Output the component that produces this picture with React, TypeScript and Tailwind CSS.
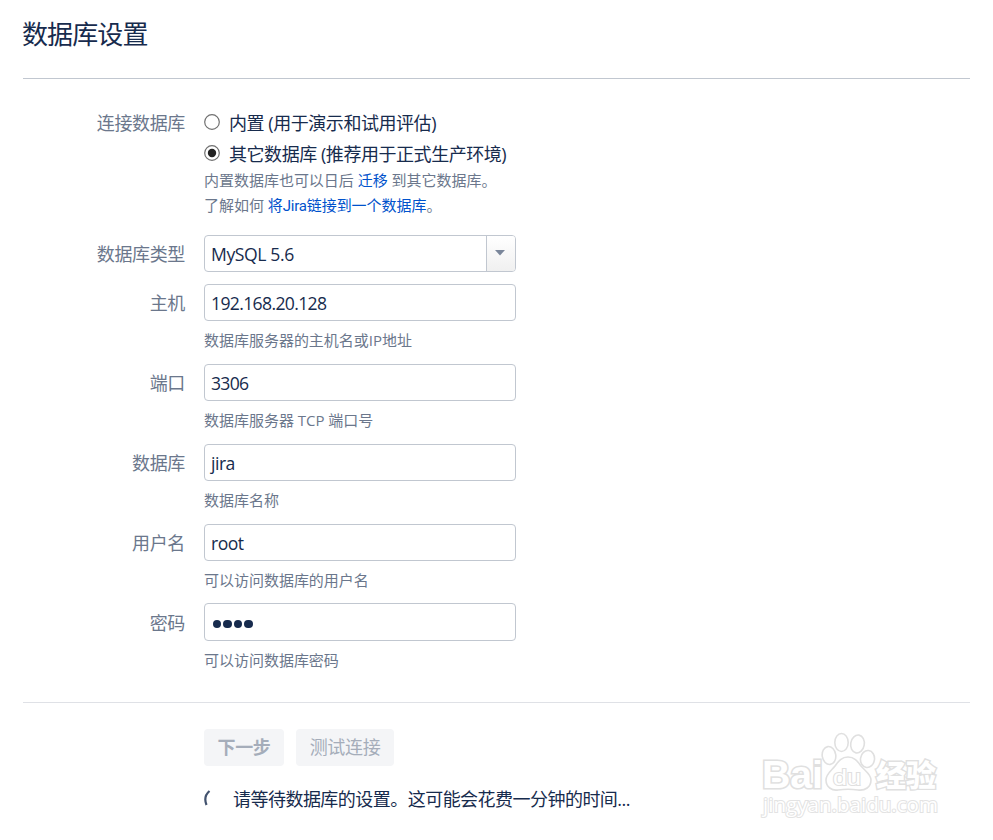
import type { ReactNode } from "react";

function Row({ label, className = "", children }: { label: string; className?: string; children: ReactNode }) {
  return (
    <div className={`flex ${className}`}>
      <label className="w-[186px] shrink-0 pr-px pt-1.5 text-right leading-[26px] text-[#6b778c]">{label}</label>
      <div className="ml-[18px] whitespace-nowrap">{children}</div>
    </div>
  );
}

function Radio({ checked = false }: { checked?: boolean }) {
  return (
    <svg width="16" height="16" viewBox="0 0 16 16" className="mr-[9px] shrink-0">
      <circle cx="8" cy="8" r="7.3" fill="#fff" stroke="#707070" strokeWidth="1.2" />
      {checked && <circle cx="8" cy="8" r="4.2" fill="#222" />}
    </svg>
  );
}

function Field({
  label,
  value,
  hint,
  spacing = "tracking-[-0.5px]",
  password = false,
}: {
  label: string;
  value: string;
  hint: string;
  spacing?: string;
  password?: boolean;
}) {
  return (
    <Row label={label} className="h-20">
      <div
        className={`flex w-[312px] items-center rounded-[4px] border border-[#c1c7d0] bg-white pl-[6px] text-[17.6px] leading-[26px] ${
          password ? "-mt-px h-[38px]" : "h-[37px]"
        }`}
      >
        {password ? (
          <span className="flex gap-[2px] pl-[1.5px] pt-[4px]">
            {value.split("").map((_, i) => (
              <i key={i} className="size-[8.5px] rounded-full bg-[#172b4d]" />
            ))}
          </span>
        ) : (
          <span className={`pt-px ${spacing}`}>{value}</span>
        )}
      </div>
      <div className="mt-2 text-[15px] leading-[22px] tracking-[-0.02px] text-[#6b778c]">{hint}</div>
    </Row>
  );
}

function Watermark() {
  return (
    <svg
      className="absolute left-[750px] top-[725px]"
      width="200"
      height="100"
      viewBox="0 0 200 100"
      fill="#fff"
      stroke="#e0e0e0"
      strokeWidth="1.6"
      letterSpacing="0"
    >
      <g style={{ fontFamily: '"Liberation Sans", "Noto Sans CJK SC", sans-serif' }}>
        <text x="12" y="62.500" fontSize="39" fontWeight="700" textLength="61" lengthAdjust="spacingAndGlyphs" strokeWidth="3.2" paintOrder="stroke">
          Bai
        </text>
        <ellipse cx="79" cy="30.500" rx="6.800" ry="9" transform="rotate(-8 79 30.500)" />
        <ellipse cx="91.500" cy="17.500" rx="6.700" ry="9" />
        <ellipse cx="107.500" cy="19" rx="6.800" ry="9" transform="rotate(10 107.500 19)" />
        <ellipse cx="117.500" cy="34" rx="7" ry="8.500" transform="rotate(8 117.500 34)" />
        <path d="M98 32c-7 0-10 5-13 9-4 5-9 8-9 14 0 7 6 11 12 10 7-1 13-1 20 0 7 1 13-3 13-10 0-6-6-9-10-14-3-4-6-9-13-9z" />
        <text x="83" y="60" fontSize="22" textLength="28" lengthAdjust="spacingAndGlyphs" strokeWidth="2" paintOrder="stroke">
          du
        </text>
        <text x="126" y="60.500" fontSize="30" fontWeight="900" textLength="60" lengthAdjust="spacingAndGlyphs" strokeWidth="2.8" paintOrder="stroke">
          经验
        </text>
      </g>
      <text
        x="13"
        y="86.500"
        fontSize="20"
        textLength="175"
        lengthAdjust="spacingAndGlyphs"
        strokeWidth="2"
        stroke="#e3e3e3"
        paintOrder="stroke"
        style={{ fontFamily: '"Open Sans", sans-serif' }}
      >
        jingyan.baidu.com
      </text>
    </svg>
  );
}

export default function App() {
  return (
    <div className="relative h-[840px] w-[993px] overflow-hidden bg-white font-['Open_Sans','Noto_Sans_CJK_SC',sans-serif] text-[18px] tracking-[-0.35px] text-[#172b4d]">
      <header className="ml-[23px] mr-[23px] h-[79px] border-b border-[#c1c7d0] pt-[16px]">
        <h1 className="-ml-px text-[26px] leading-[36px] tracking-[-0.9px]">数据库设置</h1>
      </header>

      <main className="pt-[25px]">
        <Row label="连接数据库" className="h-[131px]">
          <div className="flex h-[36px] items-center">
            <Radio />
            <span className="pt-0.5 tracking-[-0.45px]">内置 (用于演示和试用评估)</span>
          </div>
          <div className="flex h-[26px] items-center">
            <Radio checked />
            <span className="pt-0.5 tracking-[-0.45px]">其它数据库 (推荐用于正式生产环境)</span>
          </div>
          <div className="text-[15px] leading-[25px] tracking-[-0.02px] text-[#6b778c]">
            <p className="pt-0.5">
              内置数据库也可以日后 <a className="text-[#0052cc]">迁移</a> 到其它数据库。
            </p>
            <p>
              了解如何{" "}
              <a className="text-[#0052cc]">
                将<span className="font-['Roboto',sans-serif] tracking-[-0.25px]">Jira</span>链接到一个数据库
              </a>
              。
            </p>
          </div>
        </Row>

        <Row label="数据库类型" className="h-[49px]">
          <div className="flex h-[37px] w-[312px] overflow-hidden rounded-[4px] border border-[#c1c7d0]">
            <span className="grow pl-[6px] pt-[5px] text-[17.6px] leading-[26px] tracking-[-0.4px]">MySQL 5.6</span>
            <span className="flex w-[29px] justify-center border-l border-[#c1c7d0] bg-linear-to-b from-white to-[#f0f0f0] pt-[14px]">
              <svg width="10" height="6" viewBox="0 0 10 6" className="-ml-0.5">
                <path d="M0 0h10L5 5.500z" fill="#7a869a" />
              </svg>
            </span>
          </div>
        </Row>

        <Field label="主机" value="192.168.20.128" hint="数据库服务器的主机名或IP地址" spacing="tracking-[-0.65px]" />
        <Field label="端口" value="3306" hint="数据库服务器 TCP 端口号" spacing="tracking-[-0.7px]" />
        <Field label="数据库" value="jira" hint="数据库名称" />
        <Field label="用户名" value="root" hint="可以访问数据库的用户名" />
        <Field label="密码" value="jira" hint="可以访问数据库密码" password />
      </main>

      <footer className="mx-[23px] mt-[18px] border-t border-[#dfe1e6] pl-[181px] pt-[26px]">
        <div className="flex gap-3">
          <button className="h-[37px] w-20 rounded-[4px] bg-[#f4f5f7] font-bold text-[#a5adba]">下一步</button>
          <button className="h-[37px] w-[98px] rounded-[4px] bg-[#f4f5f7] text-[#a5adba]">测试连接</button>
        </div>
        <div className="mt-5 flex h-[26px] items-center">
          <svg width="8" height="18" viewBox="0 0 8 18" className="mr-[21px]" fill="none" stroke="#42526e" strokeWidth="2.2">
            <path d="M5.500 1C.8 5 .5 10 2.500 15" />
          </svg>
          <span className="tracking-[-0.53px]">请等待数据库的设置。这可能会花费一分钟的时间...</span>
        </div>
      </footer>

      <Watermark />
    </div>
  );
}
